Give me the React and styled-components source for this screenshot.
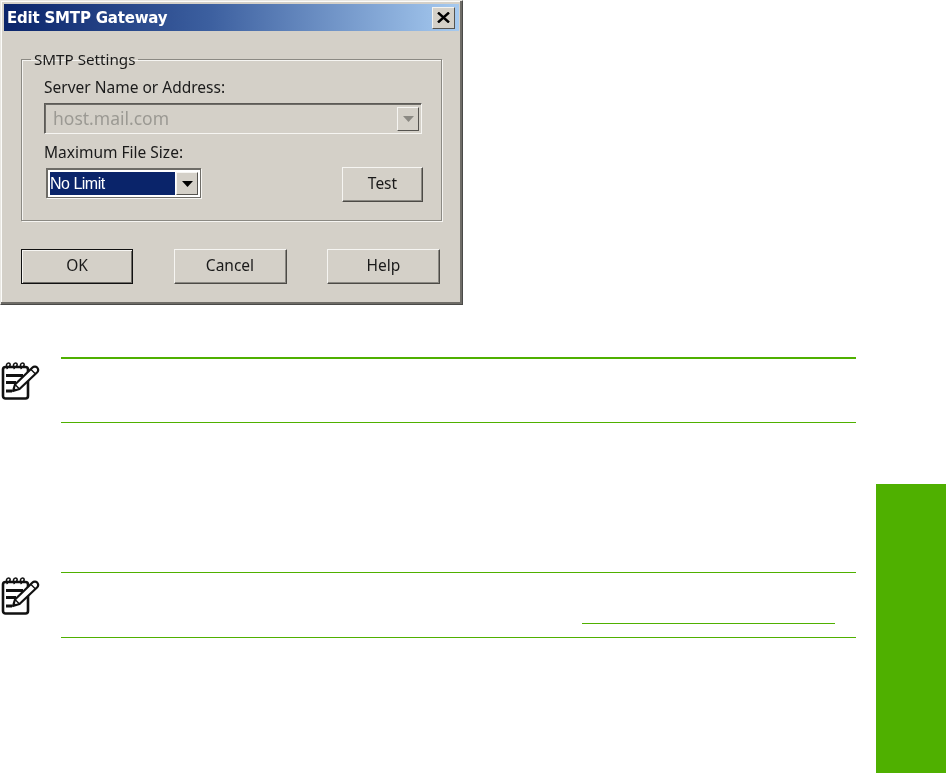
import React from 'react';
import styled, { createGlobalStyle } from 'styled-components';

const GREEN = '#4fb000';
const FACE = '#d4d0c8';

const GlobalStyle = createGlobalStyle`
    html, body {
        margin: 0;
        padding: 0;
        background: #fff;
    }
    body {
        font-family: "Noto Sans", "Liberation Sans", sans-serif;
    }
`;

const Page = styled.div`
    width: 946px;
    height: 773px;
    display: flex;
    overflow: hidden;
`;
const Main = styled.div`
    width: 876px;
    display: flex;
    flex-direction: column;
`;
const SideTab = styled.div`
    width: 70px;
    height: 289px;
    margin-top: 484px;
    background: ${ GREEN };
`;

const Dialog = styled.div`
    box-sizing: border-box;
    width: 463px;
    height: 305px;
    padding: 3px;
    background: ${ FACE };
    border: 1px solid;
    border-color: #e9e7e2 #4a4a48 #4a4a48 #e9e7e2;
    box-shadow: inset -2px -2px 0 #6e6c67, inset 1px 1px 0 #fbfbf9;
    color: #1a1a1a;
    font-size: 15.5px;
    filter: blur(0.35px);
`;
const TitleBar = styled.div`
    height: 27px;
    display: flex;
    align-items: center;
    justify-content: space-between;
    padding: 0 4px 0 3px;
    background: linear-gradient(90deg, #0a246a 0%, #3c5f9f 45%, #a6caf0 100%);
`;
const Title = styled.div`
    color: #fff;
    font-family: "DejaVu Sans", sans-serif;
    font-weight: 700;
    font-size: 15px;
    letter-spacing: -0.2px;
`;
const CloseButton = styled.div`
    box-sizing: border-box;
    width: 23px;
    height: 22px;
    display: flex;
    align-items: center;
    justify-content: center;
    background: ${ FACE };
    border: 1px solid;
    border-color: #f4f3ef #55534f #55534f #f4f3ef;
`;
const Body = styled.div`
    padding: 19px 17px 0 17px;
`;
const GroupBox = styled.fieldset`
    box-sizing: border-box;
    width: 421px;
    height: 171px;
    margin: 0;
    padding: 0 18px 0 22px;
    border: 1px solid #8b8983;
    box-shadow: 1px 1px 0 #f6f5f2, inset 1px 1px 0 #f6f5f2;
`;
const Legend = styled.legend`
    margin-left: -13px;
    padding: 0 3px;
    font-size: 15.2px;
    line-height: 18px;
`;
const Label = styled.div`
    line-height: 20px;
    height: 20px;
    margin-top: ${ props => props.$top }px;
    margin-bottom: ${ props => props.$bottom }px;
`;
const ComboBox = styled.div`
    box-sizing: border-box;
    width: ${ props => props.$width }px;
    height: ${ props => props.$enabled ? 30 : 31 }px;
    margin-top: ${ props => props.$enabled ? 1 : 0 }px;
    display: flex;
    align-items: stretch;
    padding: 3px 2px 2px 3px;
    background: ${ props => props.$enabled ? '#fff' : FACE };
    border: 1px solid;
    border-color: ${ props => props.$enabled ? '#6e6c67' : '#5c5a56 #f6f5f2 #f6f5f2 #5c5a56' };
    box-shadow: inset 1px 1px 0 #6e6c67 ${ props => props.$enabled ? ', 1px 1px 0 #f6f5f2' : '' };
`;
const ComboValue = styled.div`
    flex: 1;
    display: flex;
    align-items: center;
    padding-left: ${ props => props.$selected ? 0 : 5 }px;
    padding-bottom: ${ props => props.$selected ? 0 : 2 }px;
    background: ${ props => props.$selected ? '#0a246a' : 'transparent' };
    color: ${ props => props.$selected ? '#fff' : '#9b9993' };
    font-family: ${ props => props.$selected ? '"Liberation Sans", sans-serif' : 'inherit' };
    font-size: ${ props => props.$selected ? 16 : 17.5 }px;
    letter-spacing: ${ props => props.$selected ? -0.5 : 0 }px;
`;
const ComboArrow = styled.div`
    box-sizing: border-box;
    width: 22px;
    margin-left: ${ props => props.$enabled ? 1 : 0 }px;
    display: flex;
    align-items: center;
    justify-content: center;
    background: ${ FACE };
    border: 1px solid;
    border-color: #f6f5f2 #55534f #55534f #f6f5f2;
    color: ${ props => props.$enabled ? '#000' : '#8b8983' };
`;
const LimitRow = styled.div`
    display: flex;
    align-items: flex-start;
    justify-content: space-between;
    margin-top: 5px;
    padding-left: 2px;
    width: 377px;
`;
const Button = styled.div`
    box-sizing: border-box;
    width: ${ props => props.$width }px;
    height: 35px;
    padding-bottom: 3px;
    display: flex;
    align-items: center;
    justify-content: center;
    background: ${ FACE };
    border: 1px solid;
    border-color: ${ props => props.$default ? '#111' : '#f6f5f2 #4c4a46 #4c4a46 #f6f5f2' };
    box-shadow: ${ props => props.$default ? 'inset 1px 1px 0 #f6f5f2, inset -1px -1px 0 #6e6c67' : 'inset -1px -1px 0 #8b8983' };
    font-size: 15.5px;
`;
const ButtonRow = styled.div`
    display: flex;
    width: 419px;
    justify-content: space-between;
    margin-top: 28px;
`;

const Note = styled.div`
    display: flex;
    margin-top: ${ props => props.$top }px;
`;
const NoteIconSlot = styled.div`
    width: 61px;
    padding-top: 4px;
`;
const NoteBody = styled.div`
    box-sizing: border-box;
    width: 795px;
    height: 66px;
    border-top: ${ props => props.$heavy ? 2 : 1 }px solid ${ GREEN };
    border-bottom: 1px solid ${ GREEN };
    padding-top: 50px;
`;
const LinkRule = styled.div`
    width: 253px;
    height: 1px;
    margin-left: 521px;
    background: ${ GREEN };
`;

const ArrowDown = () => (
    <svg width="11" height="6" viewBox="0 0 11 6">
        <path d="M0 0H11L5.5 6Z" fill="currentColor" />
    </svg>
);

const CloseIcon = () => (
    <svg width="13" height="11" viewBox="0 0 13 11">
        <path d="M1 0.5L12 10.5M12 0.5L1 10.5" stroke="#000" strokeWidth="2.4" />
    </svg>
);

const NoteIcon = () => (
    <svg width="40" height="40" viewBox="0 0 40 40">
        <rect x="3" y="6" width="25" height="31.5" rx="2.5" fill="#fff" stroke="#111" strokeWidth="2.6" />
        <path d="M7.5 8C5.5 5 6.5 2 8.5 2S10.5 4 9.5 5.5M14.5 8C12.5 5 13.5 2 15.5 2S17.5 4 16.5 5.5M21.5 8C19.5 5 20.5 2 22.5 2S24.5 4 23.5 5.5" fill="none" stroke="#111" strokeWidth="1.6" />
        <path d="M6 14.5H23M6 21.5H16M6 30H12" stroke="#111" strokeWidth="2.8" />
        <path d="M13 30L15 23.5L32.5 6.5C34 5 36.5 5.5 37.5 7C38.5 8.5 38 10.5 37 11.5L19.5 28Z" fill="#fff" stroke="#111" strokeWidth="2.2" strokeLinejoin="round" />
        <path d="M31 8.5L35.5 13M15 23.5L19.5 28" stroke="#111" strokeWidth="1.4" />
        <path d="M13 30L14 26.5L16.5 29Z" fill="#111" />
    </svg>
);

const App = () => (
    <Page>
        <GlobalStyle />
        <Main>
            <Dialog>
                <TitleBar>
                    <Title>Edit SMTP Gateway</Title>
                    <CloseButton><CloseIcon /></CloseButton>
                </TitleBar>
                <Body>
                    <GroupBox>
                        <Legend>SMTP Settings</Legend>
                        <Label $top={ 9 } $bottom={ 6 }>Server Name or Address:</Label>
                        <ComboBox $width={ 378 }>
                            <ComboValue>host.mail.com</ComboValue>
                            <ComboArrow><ArrowDown /></ComboArrow>
                        </ComboBox>
                        <Label $top={ 8 } $bottom={ 0 }>Maximum File Size:</Label>
                        <LimitRow>
                            <ComboBox $enabled $width={ 155 }>
                                <ComboValue $selected>No Limit</ComboValue>
                                <ComboArrow $enabled><ArrowDown /></ComboArrow>
                            </ComboBox>
                            <Button $width={ 81 }>Test</Button>
                        </LimitRow>
                    </GroupBox>
                    <ButtonRow>
                        <Button $default $width={ 112 }>OK</Button>
                        <Button $width={ 113 }>Cancel</Button>
                        <Button $width={ 113 }>Help</Button>
                    </ButtonRow>
                </Body>
            </Dialog>
            <Note $top={ 52 }>
                <NoteIconSlot><NoteIcon /></NoteIconSlot>
                <NoteBody $heavy />
            </Note>
            <Note $top={ 149 }>
                <NoteIconSlot><NoteIcon /></NoteIconSlot>
                <NoteBody>
                    <LinkRule />
                </NoteBody>
            </Note>
        </Main>
        <SideTab />
    </Page>
);

export default App;
